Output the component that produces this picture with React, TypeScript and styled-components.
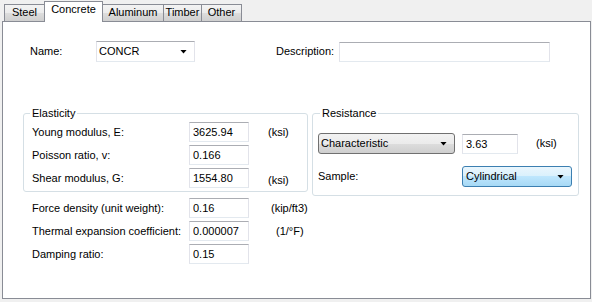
import * as React from 'react'
import styled, { createGlobalStyle } from 'styled-components'

const GlobalStyle = createGlobalStyle`
    html, body {
        margin: 0;
        padding: 0;
        background: #f0f0f0;
    }
    body {
        font-family: 'Liberation Sans', Arial, sans-serif;
        font-size: 11px;
        color: #000;
    }
`

const Window = styled.div`
    box-sizing: border-box;
    width: 592px;
    height: 302px;
    padding: 0 1px 0 2px;
    background: #f0f0f0;
    overflow: hidden;
`

const TabStrip = styled.div`
    display: flex;
    align-items: flex-end;
    height: 21px;
    padding-left: 2px;
`

const Tab = styled.div<{ $active?: boolean; $w: number }>`
    box-sizing: border-box;
    position: relative;
    z-index: ${p => (p.$active ? 1 : 0)};
    width: ${p => p.$w}px;
    height: ${p => (p.$active ? 21 : 17)}px;
    margin-left: -1px;
    margin-bottom: ${p => (p.$active ? -1 : 0)}px;
    padding-top: ${p => (p.$active ? 1 : 1)}px;
    border: 1px solid #898c95;
    border-bottom: none;
    background: ${p =>
        p.$active ? '#fff' : 'linear-gradient(#f3f3f3, #ebebeb 50%, #dddddd 50%, #cfcfcf)'};
    line-height: 13px;
    text-align: center;
    &:first-child {
        margin-left: 0;
    }
`

const Panel = styled.div`
    box-sizing: border-box;
    height: 278px;
    padding-top: 19px;
    border: 1px solid #898c95;
    background: #fff;
`

const NameRow = styled.div`
    display: grid;
    grid-template-columns: 66px 99px 81px 63px 211px;
    align-items: center;
    padding-left: 27px;
    height: 21px;
`

const Label = styled.span`
    line-height: 13px;
    white-space: nowrap;
`

const Unit = styled.span<{ $gap: number; $drop?: number }>`
    margin-left: ${p => p.$gap}px;
    padding-top: ${p => p.$drop || 0}px;
    line-height: 13px;
    white-space: nowrap;
`

const TextBox = styled.input<{ $w: number }>`
    box-sizing: border-box;
    width: ${p => p.$w}px;
    height: 20px;
    margin: 0;
    padding: 0 3px;
    border: 1px solid;
    border-color: #abadb3 #e2e3ea #e3e9ef #e2e3ea;
    background: #fff;
    font: inherit;
    color: #000;
    outline: none;
`

const comboLooks = {
    flat: 'border: 1px solid #abadb3; border-color: #abadb3 #e2e3ea #e3e9ef #e2e3ea; background: #fff;',
    button:
        'border: 1px solid #707070; border-radius: 3px; background: linear-gradient(#f2f2f2, #ebebeb 50%, #dddddd 50%, #cfcfcf);',
    hot: 'border: 1px solid #3c7fb1; border-radius: 3px; background: linear-gradient(#eaf6fd, #d9f0fc 50%, #bee6fd 50%, #a7d9f5);',
}

const ComboBox = styled.div<{ $look: keyof typeof comboLooks; $w: number }>`
    box-sizing: border-box;
    display: flex;
    align-items: center;
    justify-content: space-between;
    width: ${p => p.$w}px;
    height: 21px;
    padding: 0 7px 0 ${p => (p.$look === 'hot' ? 3 : 2)}px;
    ${p => comboLooks[p.$look]}
    line-height: 13px;
`

const Arrow = styled.span`
    width: 7px;
    height: 4px;
    background: #000;
    clip-path: polygon(0 0, 100% 0, 50% 100%);
`

const GroupRow = styled.div`
    display: flex;
    align-items: flex-start;
    gap: 4px;
    margin-top: 45px;
    padding-left: 20px;
`

const Group = styled.fieldset<{ $w: number; $pad: string }>`
    box-sizing: border-box;
    width: ${p => p.$w}px;
    min-width: 0;
    margin: 0;
    padding: ${p => p.$pad};
    border: 1px solid #d5dfe5;
    border-radius: 3px;
`

const Legend = styled.legend<{ $shift: number }>`
    margin-left: ${p => p.$shift}px;
    padding: 0 2px;
    line-height: 13px;
`

const FieldList = styled.div`
    display: flex;
    flex-direction: column;
    gap: 3px;
`

const FieldRow = styled.div`
    display: grid;
    grid-template-columns: 157px 60px auto;
    align-items: center;
    height: 20px;
`

const Section = styled.div`
    margin-top: 2px;
    padding-left: 29px;
`

const ResRow = styled.div<{ $labelW?: number }>`
    display: flex;
    align-items: center;
    height: 21px;
    & > ${Label} {
        width: ${p => p.$labelW || 0}px;
    }
`

const ResStack = styled.div`
    display: flex;
    flex-direction: column;
    gap: 12px;
`

const Field = ({ label, value, unit, gap = 19, drop }: { label: string; value: string; unit?: string; gap?: number; drop?: number }) => (
    <FieldRow>
        <Label>{label}</Label>
        <TextBox $w={60} defaultValue={value} readOnly />
        {unit && (
            <Unit $gap={gap} $drop={drop}>
                {unit}
            </Unit>
        )}
    </FieldRow>
)

const tabs = [
    { name: 'Steel', w: 41 },
    { name: 'Concrete', w: 59, active: true },
    { name: 'Aluminum', w: 62 },
    { name: 'Timber', w: 39 },
    { name: 'Other', w: 41 },
]

const App = () => {
    return (
        <Window>
            <GlobalStyle />
            <TabStrip>
                {tabs.map(t => (
                    <Tab key={t.name} $w={t.w} $active={t.active}>
                        {t.name}
                    </Tab>
                ))}
            </TabStrip>
            <Panel>
                <NameRow>
                    <Label>Name:</Label>
                    <ComboBox $look="flat" $w={99}>
                        <span>CONCR</span>
                        <Arrow />
                    </ComboBox>
                    <span />
                    <Label>Description:</Label>
                    <TextBox $w={211} defaultValue="" readOnly />
                </NameRow>

                <GroupRow>
                    <Group $w={285} $pad="2px 8px 3px 8px">
                        <Legend $shift={-2}>Elasticity</Legend>
                        <FieldList>
                            <Field label="Young modulus, E:" value="3625.94" unit="(ksi)" />
                            <Field label="Poisson ratio, v:" value="0.166" />
                            <Field label="Shear modulus, G:" value="1554.80" unit="(ksi)" drop={5} />
                        </FieldList>
                    </Group>
                    <Group $w={267} $pad="13px 5px 8px 5px">
                        <Legend $shift={2}>Resistance</Legend>
                        <ResStack>
                            <ResRow>
                                <ComboBox $look="button" $w={137}>
                                    <span>Characteristic</span>
                                    <Arrow />
                                </ComboBox>
                                <TextBox $w={56} defaultValue="3.63" readOnly style={{ marginLeft: 7 }} />
                                <Unit $gap={18}>(ksi)</Unit>
                            </ResRow>
                            <ResRow $labelW={144}>
                                <Label>Sample:</Label>
                                <ComboBox $look="hot" $w={110}>
                                    <span>Cylindrical</span>
                                    <Arrow />
                                </ComboBox>
                            </ResRow>
                        </ResStack>
                    </Group>
                </GroupRow>

                <Section>
                    <FieldList>
                        <Field label="Force density (unit weight):" value="0.16" unit="(kip/ft3)" gap={22} />
                        <Field label="Thermal expansion coefficient:" value="0.000007" unit="(1/°F)" gap={27} />
                        <Field label="Damping ratio:" value="0.15" />
                    </FieldList>
                </Section>
            </Panel>
        </Window>
    )
}

export default App
